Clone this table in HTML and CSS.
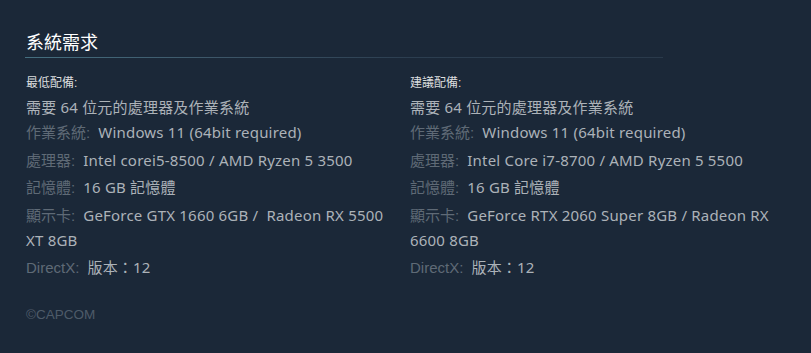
FILE: index.html
```html
<!DOCTYPE html>
<html lang="zh-Hant">
<head>
<meta charset="utf-8">
<link rel="stylesheet" href="styles.css">
</head>
<body>
<div class="sysreq">
  <h2 class="sysreq-title">系統需求</h2>
  <div class="cols">
    <div class="col">
      <div class="col-title">最低配備:</div>
      <ul class="req-list">
        <li class="first">需要 64 位元的處理器及作業系統</li>
        <li class="second"><span class="lbl">作業系統:</span> Windows 11 (64bit required)</li>
        <li><span class="lbl">處理器:</span> Intel corei5-8500 / AMD Ryzen 5 3500</li>
        <li><span class="lbl">記憶體:</span> 16 GB 記憶體</li>
        <li><span class="lbl">顯示卡:</span> GeForce GTX 1660 6GB /&nbsp; Radeon RX 5500 XT 8GB</li>
        <li><span class="lbl">DirectX:</span> 版本：12</li>
      </ul>
    </div>
    <div class="col">
      <div class="col-title">建議配備:</div>
      <ul class="req-list">
        <li class="first">需要 64 位元的處理器及作業系統</li>
        <li class="second"><span class="lbl">作業系統:</span> Windows 11 (64bit required)</li>
        <li><span class="lbl">處理器:</span> Intel Core i7-8700 / AMD Ryzen 5 5500</li>
        <li><span class="lbl">記憶體:</span> 16 GB 記憶體</li>
        <li><span class="lbl">顯示卡:</span> GeForce RTX 2060 Super 8GB / Radeon RX 6600 8GB</li>
        <li><span class="lbl">DirectX:</span> 版本：12</li>
      </ul>
    </div>
  </div>
  <div class="legal">©CAPCOM</div>
</div>
</body>
</html>
```

FILE: styles.css
```css
html, body {
  margin: 0;
  padding: 0;
  background: #1b2838;
}
body {
  width: 811px;
  height: 353px;
  overflow: hidden;
}
.sysreq {
  padding: 29px 0 0 26px;
}
.sysreq-title {
  margin: 0;
  width: 637px;
  margin-left: -1px;
  padding: 0 0 5px 1px;
  font-family: "Noto Sans CJK TC", sans-serif;
  font-weight: normal;
  font-size: 18px;
  line-height: 24px;
  color: #ffffff;
  background: linear-gradient(to right, #456f80 0%, #3d5668 30%, #2c3e50 60%, #2a3a4b 100%) no-repeat left bottom / 100% 1px;
}
.cols {
  display: flex;
  gap: 14px;
  margin-top: 16px;
}
.col {
  width: 370px;
}
.col-title {
  font-family: "Liberation Sans", "Noto Sans CJK TC", sans-serif;
  font-size: 12px;
  line-height: 18px;
  color: #dcdedf;
  margin-bottom: 3px;
}
.req-list {
  list-style: none;
  margin: 0;
  padding: 0;
  font-family: "Noto Sans", "Noto Sans CJK TC", sans-serif;
  font-size: 15px;
  line-height: 25px;
  letter-spacing: 0.2px;
  color: #acb2b8;
}
.req-list li {
  margin-top: 2.5px;
}
.req-list li.first,
.req-list li.second {
  margin-top: 0;
}
.lbl {
  font-family: "Liberation Sans", "Noto Sans CJK TC", sans-serif;
  font-size: 15px;
  letter-spacing: 0;
  color: #5f6a76;
  margin-right: 4px;
}
.legal {
  margin-top: 27px;
  font-family: "Liberation Sans", sans-serif;
  font-size: 13.5px;
  line-height: 16px;
  color: #4e5b69;
}
```
